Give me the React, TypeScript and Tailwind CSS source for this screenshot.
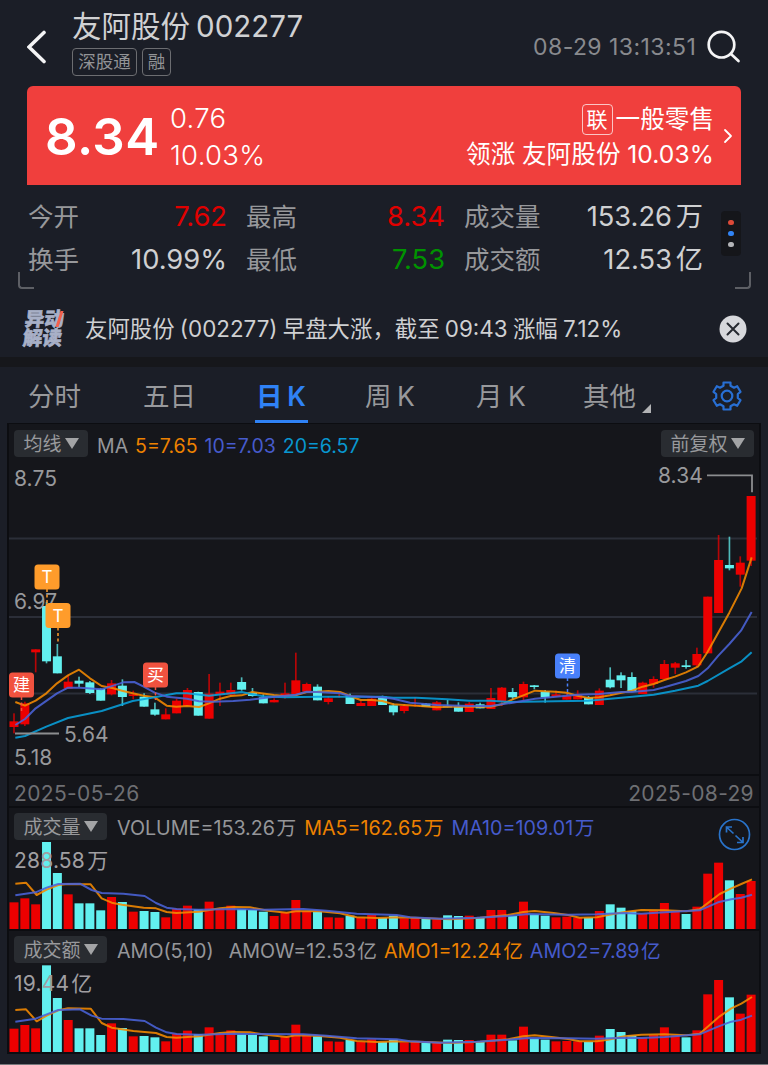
import { ChevronRight } from 'lucide-react';

// [dir, high, bodyTop, bodyBottom, low], dir 1 = up (red), 0 = down (cyan)
const candles = [
  [1, 880, 904, 921, 940], [1, 845, 850, 913, 918], [1, 688, 688, 697, 757], [0, 545, 558, 724, 730],
  [0, 672, 709, 760, 760], [1, 766, 785, 806, 806], [0, 770, 782, 791, 801], [0, 783, 787, 819, 822],
  [0, 805, 807, 842, 842], [1, 780, 790, 823, 826], [0, 778, 797, 831, 858], [1, 812, 823, 828, 838],
  [0, 820, 830, 860, 860], [0, 848, 868, 884, 887], [1, 865, 883, 898, 898], [1, 836, 842, 880, 880],
  [1, 804, 810, 858, 858], [0, 815, 816, 887, 887], [1, 762, 821, 896, 896], [1, 788, 815, 823, 858],
  [1, 788, 810, 824, 826], [0, 772, 786, 809, 812], [0, 804, 818, 828, 830], [0, 823, 832, 850, 850],
  [1, 835, 840, 847, 847], [1, 788, 820, 826, 836], [1, 698, 781, 822, 822], [1, 788, 792, 815, 815],
  [0, 793, 800, 841, 841], [1, 828, 835, 846, 853], [1, 822, 829, 831, 833], [0, 821, 828, 852, 852],
  [1, 843, 849, 858, 858], [1, 833, 836, 858, 858], [0, 827, 830, 855, 855], [0, 850, 856, 877, 886],
  [1, 852, 858, 873, 880], [1, 832, 855, 858, 860], [0, 849, 851, 861, 861], [1, 843, 847, 871, 871],
  [0, 840, 858, 862, 862], [0, 847, 860, 875, 875], [1, 846, 851, 876, 876], [0, 848, 853, 865, 865],
  [1, 804, 834, 867, 867], [1, 801, 803, 843, 858], [0, 804, 816, 832, 840], [1, 785, 792, 832, 840],
  [0, 795, 796, 801, 808], [0, 810, 814, 832, 848], [1, 812, 823, 830, 830], [1, 820, 828, 839, 839],
  [1, 811, 825, 838, 838], [0, 828, 832, 853, 853], [1, 805, 812, 855, 855], [0, 742, 779, 802, 805],
  [0, 757, 766, 781, 804], [0, 757, 771, 815, 815], [1, 785, 788, 822, 822], [1, 769, 777, 792, 803],
  [1, 720, 732, 777, 777], [1, 726, 730, 743, 762], [0, 720, 736, 741, 746], [1, 683, 702, 736, 740],
  [1, 530, 530, 700, 700], [1, 345, 420, 579, 579], [0, 350, 435, 445, 451], [1, 409, 428, 464, 500],
  [1, 228, 228, 422, 438],
];

const volume = [
  80, 92, 74, 261, 168, 104, 77, 77, 56, 96, 81, 52, 54, 51, 35, 61, 70, 59, 82, 60, 70, 60, 57, 52, 39, 50, 87, 54, 52, 35, 34, 40, 34, 42, 33,
  40, 32, 33, 31, 29, 41, 39, 40, 33, 57, 57, 39, 82, 44, 40, 35, 37, 34, 34, 54, 74, 64, 53, 46, 54, 78, 52, 45, 67, 166, 199, 146, 105, 144,
];

const amount = [
  70, 81, 71, 260, 162, 96, 71, 71, 51, 86, 72, 47, 48, 44, 32, 55, 64, 54, 74, 55, 65, 53, 51, 47, 36, 46, 82, 50, 47, 32, 31, 36, 30, 38, 30,
  37, 29, 30, 28, 27, 37, 36, 36, 30, 52, 52, 35, 76, 40, 37, 32, 33, 32, 30, 49, 69, 60, 50, 43, 51, 74, 49, 44, 65, 173, 216, 164, 115, 172,
];

const ma5 = '46,846 75,857 107,842 139,820 171,790 204,766 237,749 270,775 305,798 340,805 366,812 398,820 431,827 464,832 500,857 529,860 561,858 597,861 627,850 660,836 692,828 725,826 757,816 822,825 854,828 887,826 920,816 952,815 985,813 1020,816 1050,828 1082,840 1115,840 1147,843 1180,853 1212,855 1250,857 1310,862 1350,860 1407,860 1472,860 1505,853 1538,838 1570,826 1605,812 1635,814 1667,815 1700,818 1732,827 1765,834 1797,832 1830,826 1864,818 1896,812 1928,800 1961,792 1993,780 2025,770 2058,757 2095,739 2123,695 2188,578 2225,505 2255,412';
const ma10 = '46,915 75,897 107,865 171,820 204,803 240,803 305,808 370,787 403,786 431,800 464,818 500,830 561,836 597,844 640,845 700,843 750,839 810,832 887,824 920,815 952,816 1020,820 1050,828 1147,832 1180,836 1230,848 1310,855 1407,858 1472,858 1538,848 1605,836 1667,830 1732,824 1797,822 1864,816 1896,816 1961,810 1993,802 2058,783 2095,768 2123,745 2155,707 2188,672 2223,632 2255,576';
const ma20 = '46,953 75,948 139,920 204,894 305,873 398,843 464,832 529,820 561,820 627,827 725,816 789,829 854,832 952,830 1050,830 1147,830 1180,833 1250,833 1341,838 1407,842 1472,842 1530,846 1667,844 1765,842 1864,833 1961,824 2025,812 2095,797 2123,783 2188,745 2225,724 2255,697';

const volMa5 = '46,236 78,233 110,270 140,254 175,240 204,237 240,238 272,238 305,280 335,293 366,299 431,308 468,310 500,321 529,324 597,320 660,310 700,306 750,307 805,317 860,323 887,319 950,318 1020,325 1070,337 1130,339 1200,337 1280,340 1350,343 1440,338 1524,330 1570,321 1604,318 1661,324 1704,330 1739,338 1791,337 1824,330 1874,321 1924,315 1994,316 2059,319 2099,313 2159,267 2194,250 2224,237 2256,223';
const volMa10 = '46,271 107,262 140,248 175,237 240,236 275,255 305,264 370,266 434,273 468,294 500,308 530,312 597,314 700,312 790,314 910,312 980,317 1070,326 1190,330 1230,337 1320,341 1430,338 1524,333 1584,327 1704,329 1791,328 1874,324 1924,326 1994,322 2099,316 2154,292 2194,283 2224,278 2256,269';
const amoMa5 = '46,615 78,613 110,649 140,632 175,616 204,610 272,611 305,654 335,668 400,678 468,684 500,696 529,698 597,694 660,684 700,681 750,682 805,690 860,696 887,691 950,692 1020,698 1070,708 1130,711 1200,709 1280,711 1350,714 1440,710 1524,703 1570,694 1604,691 1661,697 1704,702 1739,709 1791,709 1824,704 1874,694 1924,689 1994,688 2059,691 2099,686 2159,634 2194,610 2224,596 2256,576';
const amoMa10 = '46,650 107,641 140,628 175,615 240,613 275,632 305,641 370,642 434,648 468,668 500,682 530,687 597,689 700,686 750,687 910,688 980,692 1070,700 1190,703 1230,709 1320,713 1430,710 1524,704 1584,699 1704,700 1791,701 1874,698 1924,699 1994,696 2099,688 2154,665 2194,650 2224,644 2256,632';

const RED = '#ec0000';
const CYAN = '#62f0ef';
const barX = (i: number) => 42 + i * 32.52;

const Line = ({ points, color }: { points: string; color: string }) => (
  <polyline points={points} fill="none" stroke={color} strokeWidth={6} strokeLinejoin="round" opacity={0.88} />
);

const DropButton = ({ label }: { label: string }) => (
  <button className="flex h-[27px] items-center gap-[3px] rounded bg-[#292c31] px-[9.5px] text-[19px] text-[#98999c]">
    <span className="pt-[2px]">{label}</span>
    <svg width="14" height="11" viewBox="0 0 14 11">
      <path d="M0 0h14L7 11z" fill="#a3a4a6" />
    </svg>
  </button>
);

const Marker = ({ x, y, label, color, to }: { x: number; y: number; label: string; color: string; to: number }) => (
  <g>
    <line x1={x} x2={x} y1={y + 12} y2={to} stroke={color} strokeWidth={1.5} strokeDasharray="3 2.5" />
    <rect x={x - 12.5} y={y - 12.5} width={25} height={25} rx={3.5} fill={color} />
    <text x={x} y={y + 6} fontSize={17} fill="#fff" textAnchor="middle">{label}</text>
  </g>
);

const BarPanel = ({ values, base, lines, label, top }: { values: number[]; base: number; lines: string[]; label: string; top: number }) => (
  <svg className="absolute inset-0 [word-spacing:-4px]" width="751" height="121" viewBox={`9 ${top} 751 121`}>
    <g transform="translate(0 805) scale(0.33333)">
      {values.map((v, i) => (
        <rect key={i} x={barX(i) - 13.5} y={base - v} width={27} height={v} fill={candles[i][0] ? RED : CYAN} />
      ))}
      <Line points={lines[0]} color="#f58a00" />
      <Line points={lines[1]} color="#4a63d8" />
    </g>
    <text x={14} y={top + 60} fontSize={21} fill="#a09fa2" letterSpacing={0.2}>{label}</text>
  </svg>
);

const Stat = ({ label, value, color, className }: { label: string; value: string; color: string; className: string }) => (
  <div className={`flex items-center justify-between ${className}`}>
    <span className="pt-[1px] text-[25.5px] text-[#97989b]">{label}</span>
    <span className={`text-[27.3px] [word-spacing:-4px] ${color}`}>{value}</span>
  </div>
);

const tabs = [
  { label: '分时', width: 'w-[115px]' },
  { label: '五日', width: 'w-[113px]' },
  { label: '日 K', width: 'w-[109px]', active: true },
  { label: '周 K', width: 'w-[111px]' },
  { label: '月 K', width: 'w-[107px]' },
  { label: '其他', width: 'w-[129px]', more: true },
];

export default function App() {
  return (
    <div className="flex h-[1065px] w-[768px] flex-col overflow-hidden border-b border-[#77787c] bg-[#1b1e27] font-['Inter','Noto_Sans_CJK_SC',sans-serif] leading-none whitespace-nowrap text-[#cfd0d2]">
      <header className="flex h-[86px] shrink-0 items-start pl-[27px]">
        <svg className="mt-[30px]" width="19" height="34" viewBox="0 0 19 34" fill="none">
          <path d="M17 2.5 2 17l15 14.500" stroke="#f4f4f5" strokeWidth="3.6" strokeLinecap="round" />
        </svg>
        <div className="ml-[26px] flex w-[461px] flex-col">
          <div className="mt-[11px] flex h-8 items-center gap-[6px] text-[#d0d1d3]">
            <span className="text-[29.5px]">友阿股份</span>
            <span className="text-[29.5px]">002277</span>
          </div>
          <div className="mt-[5px] flex gap-[5px] text-[17.5px] text-[#929396]">
            <span className="flex h-[28px] w-[65px] items-center justify-center rounded border border-[#6c6d71]">深股通</span>
            <span className="flex h-[28px] w-[29px] items-center justify-center rounded border border-[#6c6d71]">融</span>
          </div>
        </div>
        <span className="mt-[36px] w-[165px] text-[23px] tracking-[0.45px] text-[#898a8e]">08-29 13:13:51</span>
        <svg className="mt-[30px] ml-[9px]" width="34" height="34" viewBox="0 0 34 34" fill="none" stroke="#f4f4f5" strokeWidth="2.700" strokeLinecap="round">
          <circle cx="14.500" cy="14.700" r="12.800" />
          <path d="m24 24 7.500 7" />
        </svg>
      </header>

      <section className="mx-[27px] flex h-[99px] w-[714px] shrink-0 items-center rounded-t-md bg-[#f03f3d] text-white">
        <span className="ml-[18px] w-[125px] pt-[2px] text-[51px] font-semibold tracking-[0.4px]">8.34</span>
        <div className="flex flex-col gap-[10px] pt-[3px] text-[27.5px] font-light tracking-[0.3px]">
          <span>0.76</span>
          <span>10.03%</span>
        </div>
        <div className="ml-auto flex flex-col items-end gap-[7px] text-[24.600px]">
          <div className="flex items-center gap-[3px]">
            <span className="flex h-[31px] w-[31px] items-center justify-center rounded border border-white/70 text-[21px]">联</span>
            <span>一般零售</span>
          </div>
          <span className="tracking-[0.1px] [word-spacing:-0.5px]">领涨 友阿股份 10.03%</span>
        </div>
        <ChevronRight className="ml-[2px] mr-[1px]" size={24} strokeWidth={1.8} />
      </section>

      <section className="relative flex h-[115px] shrink-0 items-start pl-[28px]">
        <div className="mt-[10px] flex flex-col">
          <div className="flex h-[43px] gap-[19px]">
            <Stat label="今开" value="7.62" color="text-[#e00000]" className="w-[199px]" />
            <Stat label="最高" value="8.34" color="text-[#e00000]" className="w-[199px]" />
            <Stat label="成交量" value="153.26 万" color="text-[#cfd0d2]" className="w-[239px]" />
          </div>
          <div className="flex h-[43px] gap-[19px]">
            <Stat label="换手" value="10.99%" color="text-[#cfd0d2]" className="w-[199px]" />
            <Stat label="最低" value="7.53" color="text-[#009300]" className="w-[199px]" />
            <Stat label="成交额" value="12.53 亿" color="text-[#cfd0d2]" className="w-[239px]" />
          </div>
        </div>
        <div className="mt-[26px] ml-[18px] flex h-[45px] w-5 flex-col items-center justify-center gap-[5.500px] rounded bg-[#15161a]">
          <i className="size-[5.500px] rounded-full bg-[#dd4a38]" />
          <i className="size-[5.500px] rounded-full bg-[#3184f5]" />
          <i className="size-[5.500px] rounded-full bg-[#b4b5b8]" />
        </div>
        <i className="absolute top-[87px] left-[18px] h-[17px] w-4 rounded-bl border-b-2 border-l-2 border-[#5d5f65]" />
        <i className="absolute top-[87px] right-[17px] h-[17px] w-4 rounded-br border-r-2 border-b-2 border-[#5d5f65]" />
      </section>

      <section className="flex h-[57px] shrink-0 items-center pl-[24px]">
        <div className="relative flex w-[42px] -skew-x-6 flex-col text-[19.500px] leading-[19px] font-black text-[#a8b0c7] [-webkit-text-stroke:0.6px]">
          <span>异动</span>
          <span>解读</span>
          <i className="absolute top-[1px] right-[6px] h-[16px] w-[3px] -skew-x-12 bg-[#f5604c]" />
        </div>
        <span className="ml-[19px] pt-[2px] text-[22.400px] [word-spacing:-1px]">友阿股份 (002277) 早盘大涨，截至 09:43 涨幅 7.12%</span>
        <svg className="mr-[21px] ml-auto" width="28" height="28" viewBox="0 0 28 28">
          <circle cx="14" cy="14" r="13.500" fill="#d7d8dc" />
          <path d="m8.500 8.500 11 11m0-11-11 11" stroke="#262930" strokeWidth="2" strokeLinecap="round" />
        </svg>
      </section>

      <div className="h-[10px] shrink-0 bg-[#16171b]" />

      <nav className="flex h-[56px] shrink-0 items-center pl-[28px] text-[26.500px] text-[#98999c]">
        {tabs.map((tab) => (
          <div key={tab.label} className={`flex h-full items-stretch ${tab.width}`}>
            <span className={`relative flex items-center pt-[3px] [word-spacing:-2px] ${tab.active ? 'font-semibold text-[#2f82f6]' : ''}`}>
              {tab.label}
              {tab.active && <i className="absolute bottom-0 -left-[1px] h-[3px] w-[53px] bg-[#2f82f6]" />}
            </span>
            {tab.more && (
              <svg className="mt-[37px] ml-[6px]" width="9" height="9" viewBox="0 0 9 9">
                <path d="M9 0v9H0z" fill="#b2b3b5" />
              </svg>
            )}
          </div>
        ))}
        <svg className="mt-[2px]" width="30" height="30" viewBox="0 0 30 30" fill="none" stroke="#286fd4" strokeWidth="2.200" strokeLinejoin="round">
          <path d="M11.500 1.500h7v3.200l3.500 2 3.200-1.500 3.300 5.600-2.700 2.200v4l2.700 2.200-3.300 5.600-3.200-1.500-3.500 2v3.200h-7v-3.200l-3.500-2-3.200 1.500-3.300-5.600L4.200 17v-4l-2.700-2.200 3.300-5.600L8 6.700l3.500-2z" />
          <circle cx="15" cy="15" r="5.300" />
        </svg>
      </nav>

      <main className="mx-[7px] flex h-[631px] shrink-0 flex-col border-x-2 border-t border-b-2 border-[#0c0d11] bg-[#15161b] text-[#95969a]">
        <section className="relative h-[350px] shrink-0">
          <svg className="absolute inset-0" width="751" height="350" viewBox="9 424 751 350">
            <g stroke="#2b2e38" strokeWidth="2">
              <path d="M9 538.500h748M9 617h748M9 693.500h748" />
            </g>
            <g transform="translate(0 420) scale(0.33333)">
              {candles.map(([up, high, open, close, low], i) => (
                <g key={i} fill={up ? RED : CYAN}>
                  <rect x={barX(i) - 2.5} y={high} width={5} height={low - high} opacity={0.75} />
                  <rect x={barX(i) - 13.5} y={open} width={27} height={close - open} />
                </g>
              ))}
              <Line points={ma5} color="#f58a00" />
              <Line points={ma20} color="#08a0dc" />
              <Line points={ma10} color="#4a63d8" />
            </g>
            <path d="M15 733.500h44M707 475.300h45v17" fill="none" stroke="#8c8d90" strokeWidth="1.800" />
            <g fontSize="21" fill="#98999c" letterSpacing="0.100">
              <text x="14" y="485.500">8.75</text>
              <text x="14" y="609">6.97</text>
              <text x="64" y="741.500">5.64</text>
              <text x="14" y="765">5.18</text>
              <text x="658" y="483">8.34</text>
            </g>
            <Marker x={47} y={577} label="T" color="#ff9c2b" to={605} />
            <Marker x={58} y={615.5} label="T" color="#ff9c2b" to={644} />
            <Marker x={21.5} y={685} label="建" color="#f1523f" to={712} />
            <Marker x={155.5} y={675} label="买" color="#f1523f" to={700} />
            <Marker x={567.5} y={666} label="清" color="#4880fa" to={695} />
          </svg>
          <div className="relative flex items-start pt-[6px] pr-[5px] pl-[5px]">
            <DropButton label="均线" />
            <div className="mt-[7px] ml-[9px] flex gap-[7px] text-[19.500px]">
              <span>MA</span>
              <span className="text-[#ed8200]">5=7.65</span>
              <span className="text-[#465bcc]">10=7.03</span>
              <span className="text-[#0897d0]">20=6.57</span>
            </div>
            <div className="ml-auto">
              <DropButton label="前复权" />
            </div>
          </div>
        </section>

        <section className="flex h-[34px] shrink-0 items-center justify-between border-y-2 border-[#0c0d11] px-[5px] pt-1 text-[21px] tracking-[0.35px] text-[#6e6f73]">
          <span>2025-05-26</span>
          <span>2025-08-29</span>
        </section>

        <section className="relative h-[121px] shrink-0">
          <BarPanel values={volume} base={372} lines={[volMa5, volMa10]} label="288.58 万" top={808} />
          <div className="relative flex items-start pt-[5px] pl-[5px]">
            <DropButton label="成交量" />
            <div className="mt-[6px] ml-[10px] flex gap-[8px] text-[19.700px] [word-spacing:-4px]">
              <span>VOLUME=153.26 万</span>
              <span className="text-[#ed8200]">MA5=162.65 万</span>
              <span className="text-[#465bcc]">MA10=109.01 万</span>
            </div>
            <svg className="mt-[5px] mr-[8px] ml-auto" width="33" height="33" viewBox="0 0 33 33" fill="none" stroke="#2973ca" strokeWidth="1.700">
              <circle cx="16.500" cy="16.500" r="15" />
              <path d="M8.500 14.500V9H14M9 9.500l6.500 6M17.500 17.500l7 6.500M19 24.500h6V19" />
            </svg>
          </div>
        </section>

        <section className="relative mt-[2px] h-[121px] shrink-0">
          <i className="absolute -top-[2px] h-[2px] w-full bg-[#0c0d11]" />
          <BarPanel values={amount} base={741} lines={[amoMa5, amoMa10]} label="19.44 亿" top={931} />
          <div className="relative flex items-start pt-[5px] pl-[5px]">
            <DropButton label="成交额" />
            <div className="mt-[6px] ml-[10px] flex gap-[7px] text-[19.700px] [word-spacing:-4px]">
              <span className="mr-[8px]">AMO(5,10)</span>
              <span>AMOW=12.53 亿</span>
              <span className="text-[#ed8200]">AMO1=12.24 亿</span>
              <span className="text-[#465bcc]">AMO2=7.89 亿</span>
            </div>
          </div>
        </section>
      </main>
    </div>
  );
}
